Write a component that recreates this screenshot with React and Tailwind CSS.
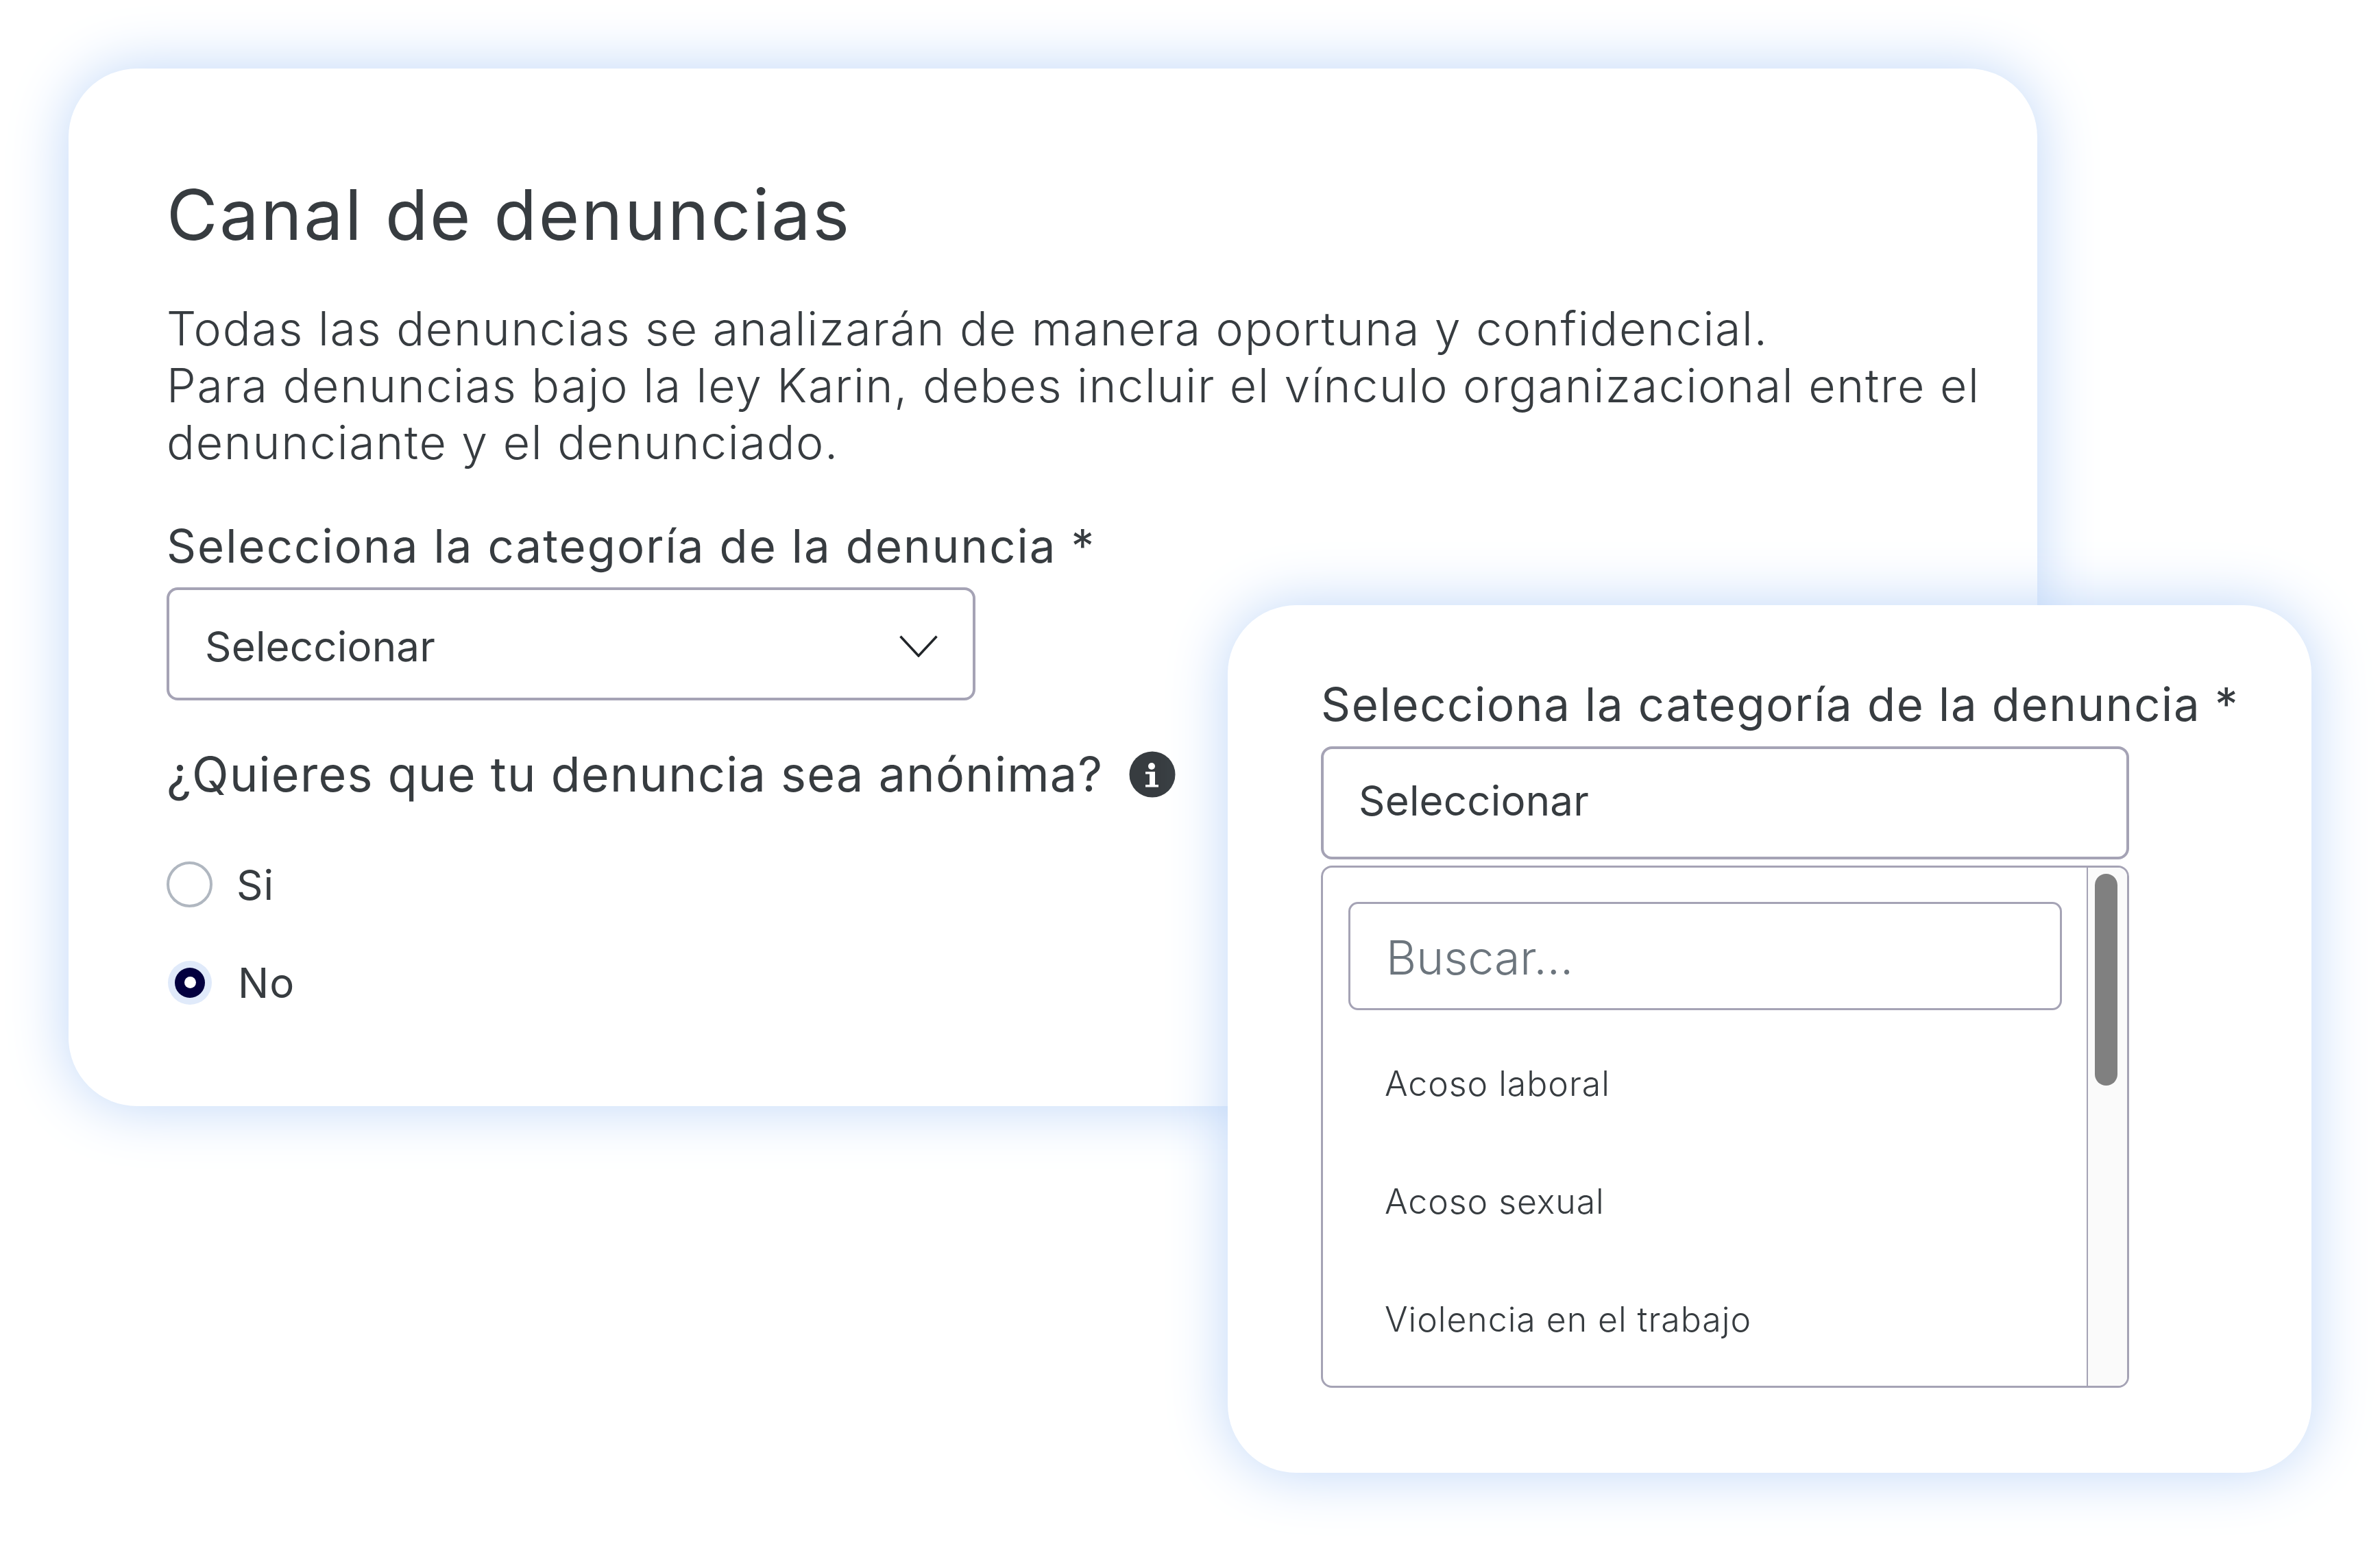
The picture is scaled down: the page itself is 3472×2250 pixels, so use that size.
const shadow = "shadow-[0_0_88px_rgba(190,214,248,1)]";
const inter = "font-['Inter',sans-serif] text-[#373c40]";

export default function App() {
  return (
    <div className={`relative w-[3472px] h-[2250px] overflow-hidden bg-white ${inter}`}>
      <div className="pt-[100px] pl-[100px]">
        <div className={`w-[2872px] h-[1514px] rounded-[100px] bg-white pl-[143px] pt-[153px] ${shadow}`}>
          <h1 className="h-[120px] text-[102px] leading-[120px] font-normal tracking-[2.7px] whitespace-nowrap">Canal de denuncias</h1>
          <p className="mt-[65px] text-[68px] leading-[83px] font-light tracking-[1.7px] whitespace-nowrap">
            Todas las denuncias se analizarán de manera oportuna y confidencial.<br />
            Para denuncias bajo la ley Karin, debes incluir el vínculo organizacional entre el<br />
            denunciante y el denunciado.
          </p>
          <div className="mt-[70px] h-[80px] text-[67px] leading-[80px] font-normal tracking-[2.1px] whitespace-nowrap">Selecciona la categoría de la denuncia *</div>
          <div className="mt-[20px] flex h-[165px] w-[1180px] items-center justify-between rounded-[16px] border-[4px] border-[#a5a3b5] pl-[52px] pr-[51px] pt-[6px] text-[60px] tracking-[0.2px]">
            <span>Seleccionar</span>
            <svg width="56" height="32" viewBox="0 0 56 32" fill="none" stroke="#212529" strokeWidth="3.5"><path d="M1.5 1.5 L28 30 L54.5 1.5" /></svg>
          </div>
          <div className="mt-[65px] flex h-[86px] items-center">
            <span className="text-[70px] leading-[86px] tracking-[1.3px] whitespace-nowrap">¿Quieres que tu denuncia sea anónima?</span>
            <svg className="ml-[38px]" width="68" height="68" viewBox="0 0 68 68">
              <circle cx="34" cy="34" r="33.5" fill="#373c40" />
              <circle cx="33" cy="22" r="5" fill="#fff" />
              <path d="M24 30 H38 V49 H43 V52.5 H24 V49 H30 V33.5 H24 Z" fill="#fff" />
            </svg>
          </div>
          <div className="mt-[84px] flex h-[67px] items-center">
            <span className="h-[67px] w-[67px] rounded-full border-[4px] border-[#b0b7c0]" />
            <span className="ml-[35px] text-[60px] tracking-[1px]">Si</span>
          </div>
          <div className="mt-[76px] flex h-[67px] items-center">
            <span className="ml-[2px] flex h-[64px] w-[64px] items-center justify-center rounded-full bg-[#e0eafa]">
              <span className="flex h-[44px] w-[44px] items-center justify-center rounded-full bg-[#03003f]">
                <span className="h-[17px] w-[17px] rounded-full bg-white" />
              </span>
            </span>
            <span className="ml-[38px] text-[60px] tracking-[1px]">No</span>
          </div>
        </div>
      </div>

      <div className={`absolute left-[1791px] top-[883px] h-[1266px] w-[1581px] rounded-[100px] bg-white pl-[136px] pt-[105px] ${shadow}`}>
        <div className="h-[80px] text-[67px] leading-[80px] font-normal tracking-[1.7px] whitespace-nowrap">Selecciona la categoría de la denuncia *</div>
        <div className="mt-[21px] flex h-[165px] w-[1179px] items-center rounded-[16px] border-[4px] border-[#a5a3b5] pb-[8px] pl-[51px] text-[60px] tracking-[0.2px]">Seleccionar</div>
        <div className="mt-[9px] flex h-[762px] w-[1179px] overflow-hidden rounded-[16px] border-[3px] border-[#a5a3b5]">
          <div className="w-[1114px] px-[37px] pt-[50px]">
            <div className="flex h-[158px] w-[1041px] items-center rounded-[14px] border-[3px] border-[#a5a3b5] pl-[52px] pt-[3px] text-[68px] font-light text-[#6c757d]">Buscar...</div>
            <div className="-ml-[37px] mt-[21px] flex flex-col pl-[90px] text-[50px] font-light tracking-[0.95px]">
              <div className="flex h-[172px] items-center">Acoso laboral</div>
              <div className="flex h-[172px] items-center">Acoso sexual</div>
              <div className="flex h-[172px] items-center">Violencia en el trabajo</div>
            </div>
          </div>
          <div className="flex-1 border-l-[2px] border-[#a5a3b5] bg-[#fafafa] pl-[10px] pt-[9px]">
            <div className="h-[309px] w-[33px] rounded-full bg-[#808080]" />
          </div>
        </div>
      </div>
    </div>
  );
}
